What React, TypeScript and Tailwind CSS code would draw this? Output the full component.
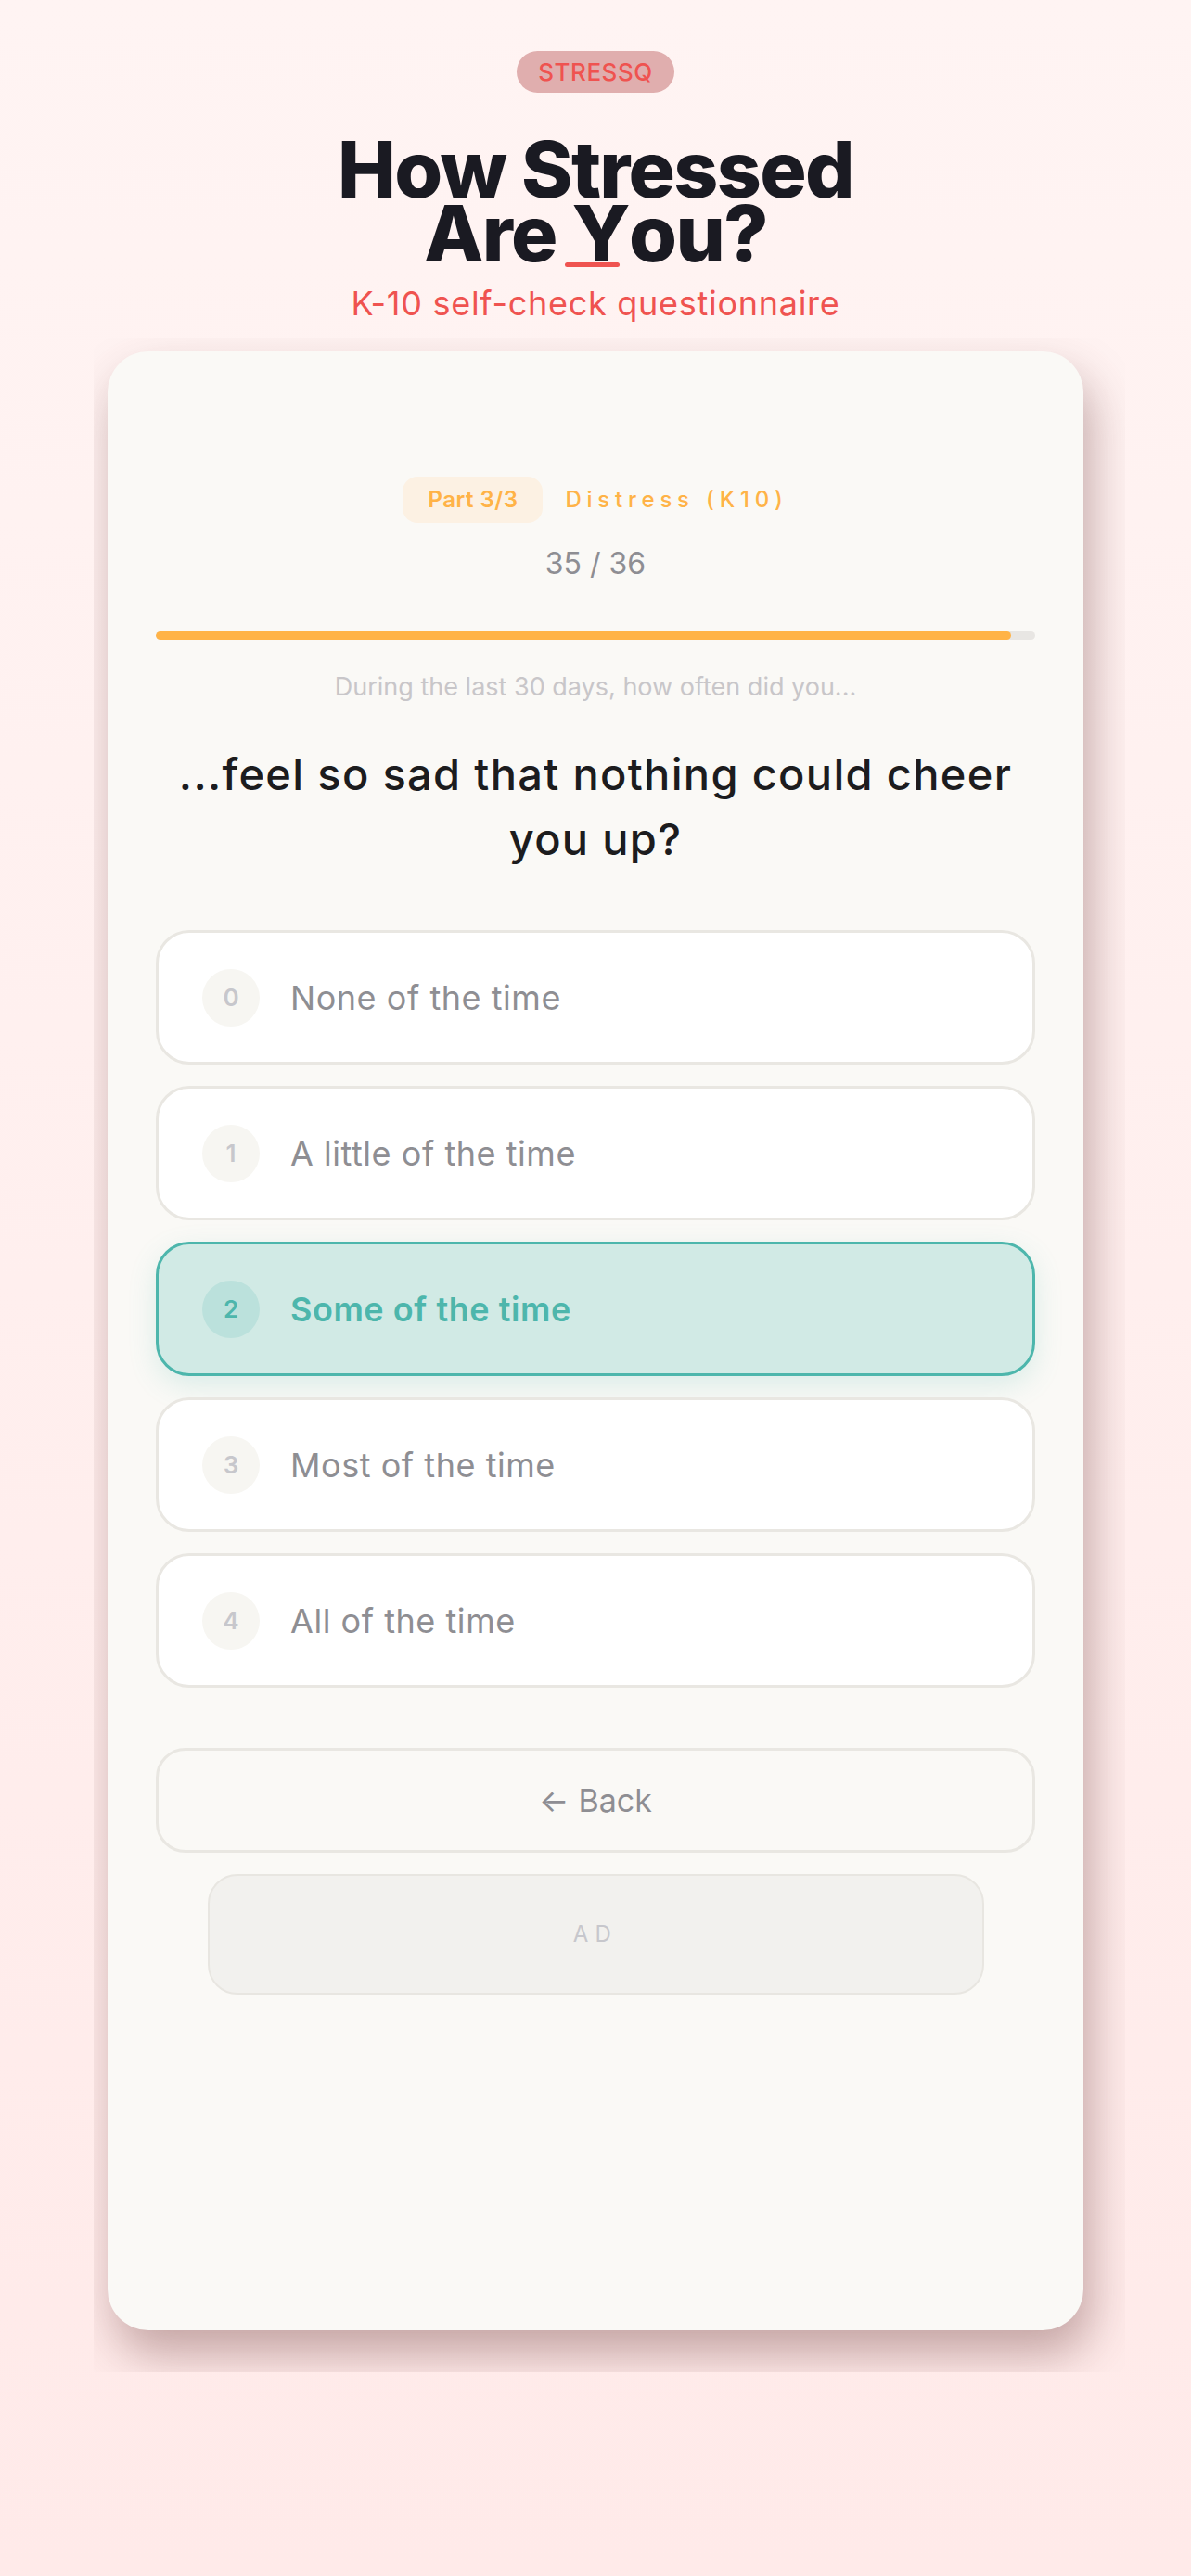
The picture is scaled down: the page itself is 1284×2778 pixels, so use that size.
const options = [
  { value: 0, label: 'None of the time' },
  { value: 1, label: 'A little of the time' },
  { value: 2, label: 'Some of the time' },
  { value: 3, label: 'Most of the time' },
  { value: 4, label: 'All of the time' },
]

const selected = 2
const current = 35
const total = 36

function OptionRow({ value, label }: { value: number; label: string }) {
  const active = value === selected
  return (
    <button
      type="button"
      className={
        active
          ? 'flex h-[145px] w-full items-center gap-[33px] rounded-[36px] border-[3px] border-[#4db6ac] bg-[#d1eae5] pl-[47px] text-left shadow-[0_10px_30px_rgba(77,182,172,0.18)]'
          : 'flex h-[145px] w-full items-center gap-[33px] rounded-[36px] border-[3px] border-[#e9e7e2] bg-white pl-[47px] text-left'
      }
    >
      <span
        className={
          active
            ? 'flex h-[62px] w-[62px] items-center justify-center rounded-full bg-[#bbe1dc] text-[26px] font-semibold text-[#4db6ac]'
            : 'flex h-[62px] w-[62px] items-center justify-center rounded-full bg-[#f7f6f2] text-[26px] font-semibold text-[#c7c7cc]'
        }
      >
        {value}
      </span>
      <span
        className={
          active
            ? 'text-[36px] font-semibold tracking-[0.015em] text-[#4db6ac]'
            : 'text-[36px] font-normal tracking-[0.015em] text-[#8e8e93]'
        }
      >
        {label}
      </span>
    </button>
  )
}

export default function App() {
  const pct = (current / total) * 100

  return (
    <div
      className="min-h-screen bg-gradient-to-b from-[#fff4f3] to-[#ffeae9] pb-[200px]"
      style={{ fontFamily: 'Inter, "Noto Sans", Roboto, sans-serif' }}
    >
      <header className="flex flex-col items-center pt-[55px]">
        <div className="flex h-[45px] w-[170px] items-center justify-center rounded-full bg-[#e0aeae] text-[26px] font-medium tracking-[0.02em] text-[#ef5350]">
          STRESSQ
        </div>
        <h1 className="mt-[48px] text-center text-[84px] font-extrabold leading-[69px] tracking-[-0.02em] text-[#1a1a22]">
          How Stressed
          <br />
          Are{' '}
          <span className="relative">
            Y
            <span className="absolute bottom-[14px] left-[-8px] h-[5px] w-[59px] rounded-full bg-[#ef5350]" />
          </span>
          ou?
        </h1>
        <p className="mt-[25px] text-[36px] leading-[33px] tracking-[0.02em] text-[#ef5350]">
          K-10 self-check questionnaire
        </p>
      </header>

      <div className="ml-[101px] mt-[20px] w-[1112px] overflow-hidden pb-[45px] pl-[15px] pr-[45px] pt-[15px]">
        <main className="flex h-[2134px] w-[1052px] flex-col rounded-[44px] bg-[#faf9f6] px-[52px] pt-[135px] shadow-[8px_26px_50px_rgba(100,50,50,0.38)]">
          <div className="flex items-center justify-center gap-[24px]">
            <span className="flex h-[50px] items-center rounded-[16px] bg-[#fcf1e3] px-[27px] text-[24px] font-semibold tracking-[0.02em] text-[#ffb347]">
              Part 3/3
            </span>
            <span className="text-[24px] font-medium tracking-[0.24em] text-[#ffb347]">Distress (K10)</span>
          </div>

          <p className="mt-[28px] text-center text-[32px] leading-[32px] text-[#8e8e93]">
            {current} / {total}
          </p>

          <div className="mt-[57px] h-[9px] w-full overflow-hidden rounded-full bg-[#e8e6e3]">
            <div className="h-full rounded-full bg-[#ffb347]" style={{ width: `${pct}%` }} />
          </div>

          <p className="mt-[37px] text-center text-[27px] leading-[27px] text-[#c8c6c9]">
            During the last 30 days, how often did you...
          </p>

          <h2 className="mx-auto mt-[46px] max-w-[930px] text-center text-[47px] font-medium leading-[70px] tracking-[0.028em] text-[#1c1c1e]">
            ...feel so sad that nothing could cheer you up?
          </h2>

          <div className="mt-[63px] flex flex-col gap-[23px]">
            {options.map((o) => (
              <OptionRow key={o.value} value={o.value} label={o.label} />
            ))}
          </div>

          <button
            type="button"
            className="mt-[65px] flex h-[113px] w-full items-center justify-center gap-[10px] rounded-[32px] border-[3px] border-[#e9e7e2] text-[34px] text-[#8e8e93]"
          >
            <span>←</span>
            <span>Back</span>
          </button>

          <div className="mx-auto mt-[23px] flex h-[130px] w-[837px] items-center justify-center rounded-[32px] border-2 border-[#e8e6e1] bg-[#f2f1ee] text-[24px] tracking-[0.3em] text-[#c7c7cc]">
            AD
          </div>
        </main>
      </div>
    </div>
  )
}
